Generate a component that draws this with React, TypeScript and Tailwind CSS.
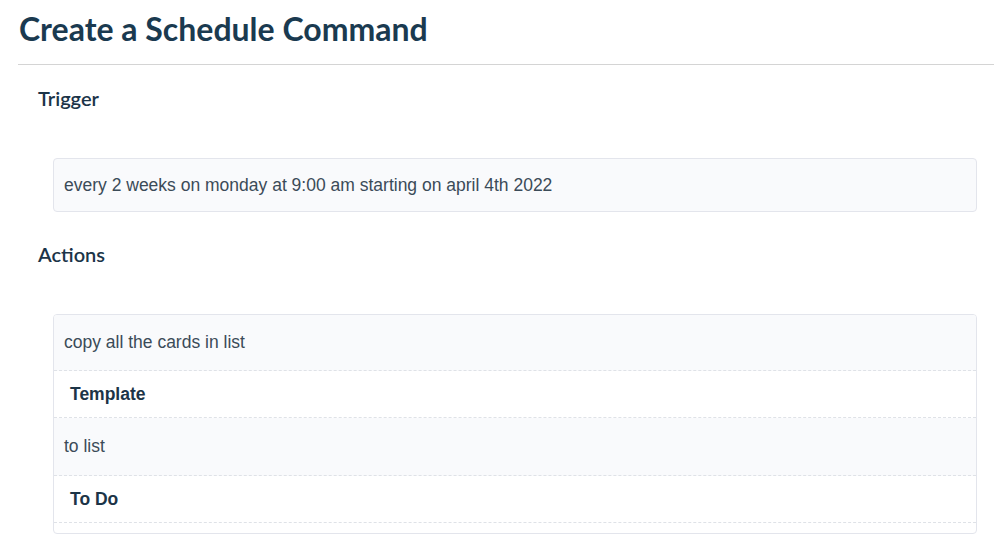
import React from "react";

const actionRows = [
  { text: "copy all the cards in list", strong: false, h: "h-[56px]" },
  { text: "Template", strong: true, h: "h-[47px]" },
  { text: "to list", strong: false, h: "h-[58px]" },
  { text: "To Do", strong: true, h: "h-[47px]" },
];

const SectionTitle: React.FC<{ children: React.ReactNode }> = ({ children }) => (
  <h2 className="pl-5 text-[20px] font-semibold leading-[24px] text-[#1b3448] [font-family:Lato,sans-serif]">
    {children}
  </h2>
);

export default function App() {
  return (
    <div className="min-h-screen bg-white pl-[18px] [font-family:'Liberation_Sans',Arial,sans-serif]">
      <h1 className="pl-px pt-[10px] pb-[16px] text-[32px] font-bold leading-[38px] text-[#1a3a50] [font-family:Lato,sans-serif]">
        Create a Schedule Command
      </h1>
      <div className="h-px bg-[#d4d4d4]" />

      <div className="pt-[21px]">
        <SectionTitle>Trigger</SectionTitle>
        <div className="mt-[48px] mr-[17px] ml-[35px] flex h-[54px] items-center rounded border border-[#e3e5ec] bg-[#f9fafc] px-[10px] text-[17.5px] text-[#3b4b58]">
          every 2 weeks on monday at 9:00 am starting on april 4th 2022
        </div>
      </div>

      <div className="pt-[30px]">
        <SectionTitle>Actions</SectionTitle>
        <div className="mt-[48px] mr-[17px] ml-[35px] overflow-hidden rounded border border-[#e3e5ec] bg-white">
          {actionRows.map((row, i) => (
            <div
              key={i}
              className={`flex items-center border-b border-dashed border-[#dfe2e7] ${row.h} ${
                row.strong
                  ? "bg-white px-4 font-bold text-[#1c3447]"
                  : "bg-[#f9fafc] px-[10px] text-[#3b4b58]"
              } text-[17.5px]`}
            >
              {row.text}
            </div>
          ))}
          <div className="h-[10px]" />
        </div>
      </div>
    </div>
  );
}
